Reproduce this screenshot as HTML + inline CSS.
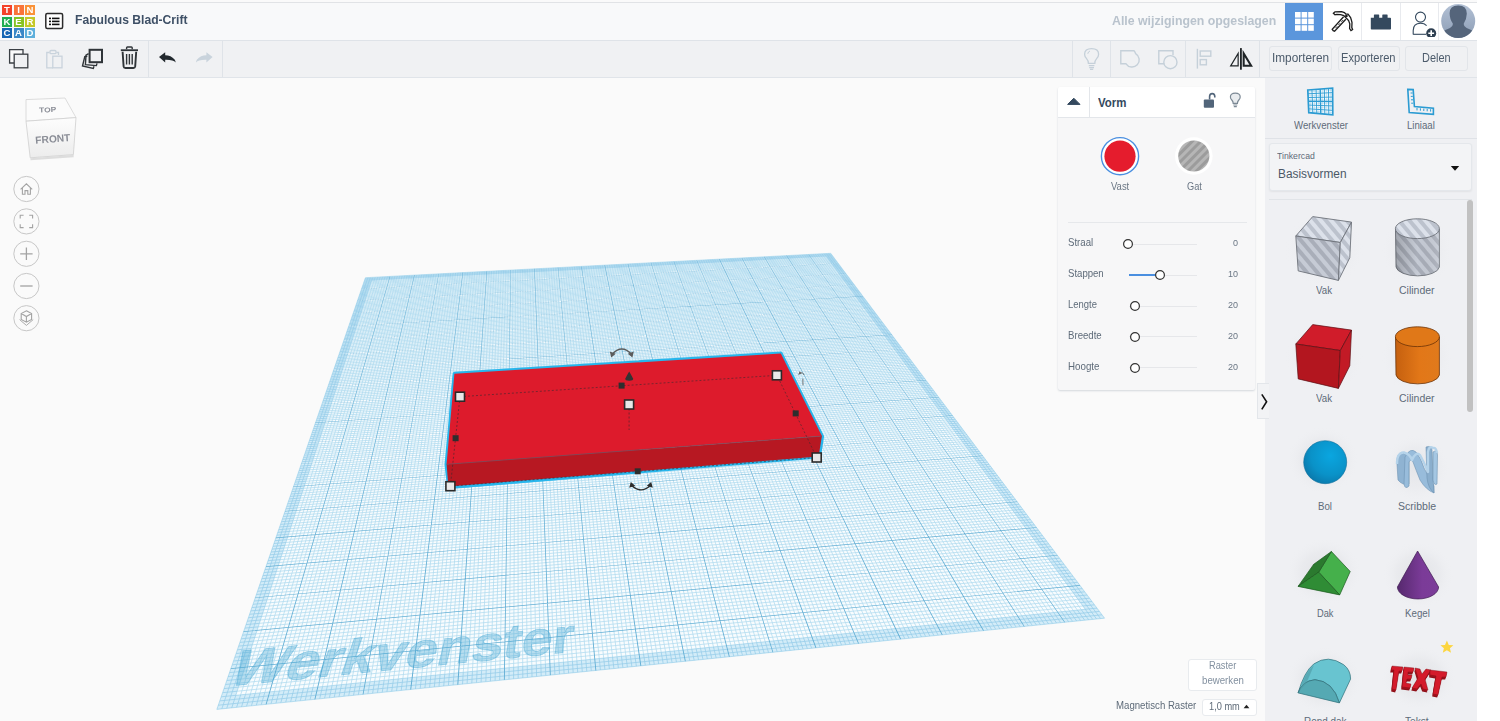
<!DOCTYPE html>
<html><head><meta charset="utf-8">
<style>
*{box-sizing:border-box;margin:0;padding:0}
html,body{width:1500px;height:721px;overflow:hidden;background:#fff;font-family:"Liberation Sans",sans-serif}
.abs{position:absolute}
#app{position:absolute;left:0;top:0;width:1477px;height:721px;background:#fafafa;overflow:hidden}
#hdr{position:absolute;left:0;top:3px;width:1477px;height:37px;background:#f8f9fa}
#tb{position:absolute;left:0;top:41px;width:1477px;height:37px;background:#f0f1f3;border-bottom:1px solid #e0e4e9}
.btn{position:absolute;height:25px;border:1px solid #e2e5e9;border-radius:3px;background:#f0f1f3}
#rp{position:absolute;left:1265px;top:78px;width:212px;height:643px;background:#eff0f3}
.grid{position:absolute;left:0;top:78px}
.sep{position:absolute;width:1px;background:#dfe3e8}
.t{position:absolute;white-space:nowrap;transform-origin:0 0}
.lg{position:absolute;width:10px;height:10px;color:#fff;font-weight:bold;font-size:9.6px;line-height:10.4px;text-align:center}
</style></head><body>
<div id="app">
<div id="view" class="abs" style="left:0;top:78px;width:1265px;height:643px;background:#fafafa">
</div>
<svg class="grid" width="1265" height="643" viewBox="0 78 1265 643">
<path d="M365.4 277.7L830.7 253.3L1104.6 618.2L216.8 709.4Z" fill="#f8fcfe"/>
<path d="M365.4 277.7L216.8 709.4M365.4 277.7L830.7 253.3M367.9 277.6L221.8 708.9M365.0 278.8L831.4 254.3M370.3 277.4L226.7 708.4M364.6 279.9L832.2 255.3M372.8 277.3L231.7 707.9M364.3 281.0L832.9 256.2M375.2 277.2L236.6 707.4M363.9 282.1L833.7 257.2M377.7 277.1L241.5 706.9M363.5 283.2L834.4 258.2M380.2 276.9L246.5 706.4M363.1 284.3L835.1 259.2M382.6 276.8L251.4 705.8M362.7 285.5L835.9 260.2M385.1 276.7L256.3 705.3M362.3 286.6L836.7 261.2M387.5 276.5L261.2 704.8M361.9 287.7L837.4 262.2M392.4 276.3L271.0 703.8M361.2 290.0L838.9 264.3M394.9 276.2L275.9 703.3M360.8 291.2L839.7 265.3M397.3 276.0L280.8 702.8M360.4 292.4L840.5 266.3M399.8 275.9L285.7 702.3M360.0 293.5L841.3 267.4M402.2 275.8L290.6 701.8M359.5 294.7L842.1 268.4M404.7 275.6L295.4 701.3M359.1 295.9L842.8 269.5M407.1 275.5L300.3 700.8M358.7 297.1L843.6 270.5M409.5 275.4L305.2 700.3M358.3 298.3L844.4 271.6M412.0 275.3L310.0 699.8M357.9 299.5L845.2 272.7M416.8 275.0L319.7 698.8M357.1 301.9L846.8 274.8M419.3 274.9L324.6 698.3M356.7 303.1L847.6 275.9M421.7 274.7L329.4 697.8M356.2 304.3L848.5 277.0M424.1 274.6L334.2 697.3M355.8 305.6L849.3 278.0M426.6 274.5L339.0 696.8M355.4 306.8L850.1 279.1M429.0 274.4L343.9 696.3M355.0 308.0L850.9 280.2M431.4 274.2L348.7 695.9M354.5 309.3L851.8 281.3M433.8 274.1L353.5 695.4M354.1 310.5L852.6 282.5M436.3 274.0L358.3 694.9M353.7 311.8L853.4 283.6M441.1 273.7L367.9 693.9M352.8 314.3L855.1 285.8M443.5 273.6L372.6 693.4M352.3 315.6L856.0 287.0M446.0 273.5L377.4 692.9M351.9 316.9L856.8 288.1M448.4 273.3L382.2 692.4M351.5 318.2L857.7 289.2M450.8 273.2L386.9 691.9M351.0 319.5L858.5 290.4M453.2 273.1L391.7 691.4M350.6 320.8L859.4 291.6M455.6 273.0L396.5 690.9M350.1 322.2L860.3 292.7M458.0 272.8L401.2 690.5M349.6 323.5L861.2 293.9M460.4 272.7L406.0 690.0M349.2 324.8L862.0 295.1M465.2 272.5L415.4 689.0M348.3 327.5L863.8 297.4M467.7 272.3L420.2 688.5M347.8 328.9L864.7 298.6M470.1 272.2L424.9 688.0M347.3 330.2L865.6 299.8M472.5 272.1L429.6 687.5M346.8 331.6L866.5 301.0M474.9 272.0L434.3 687.1M346.4 333.0L867.4 302.2M477.3 271.8L439.0 686.6M345.9 334.4L868.3 303.5M479.7 271.7L443.7 686.1M345.4 335.7L869.3 304.7M482.1 271.6L448.4 685.6M344.9 337.2L870.2 305.9M484.4 271.5L453.1 685.1M344.5 338.6L871.1 307.2M489.2 271.2L462.5 684.2M343.5 341.4L873.0 309.6M491.6 271.1L467.1 683.7M343.0 342.8L873.9 310.9M494.0 271.0L471.8 683.2M342.5 344.3L874.9 312.2M496.4 270.8L476.5 682.7M342.0 345.7L875.8 313.4M498.8 270.7L481.1 682.2M341.5 347.2L876.8 314.7M501.2 270.6L485.8 681.8M341.0 348.7L877.8 316.0M503.6 270.5L490.4 681.3M340.5 350.1L878.7 317.3M505.9 270.3L495.1 680.8M340.0 351.6L879.7 318.6M508.3 270.2L499.7 680.3M339.4 353.1L880.7 319.9M513.1 270.0L509.0 679.4M338.4 356.1L882.7 322.5M515.5 269.8L513.6 678.9M337.9 357.6L883.7 323.9M517.8 269.7L518.2 678.4M337.4 359.2L884.7 325.2M520.2 269.6L522.8 678.0M336.8 360.7L885.7 326.5M522.6 269.5L527.4 677.5M336.3 362.2L886.7 327.9M525.0 269.3L532.0 677.0M335.8 363.8L887.7 329.2M527.3 269.2L536.6 676.5M335.2 365.4L888.7 330.6M529.7 269.1L541.2 676.1M334.7 366.9L889.7 332.0M532.1 269.0L545.8 675.6M334.1 368.5L890.8 333.3M536.8 268.7L554.9 674.7M333.0 371.7L892.9 336.1M539.2 268.6L559.5 674.2M332.5 373.3L893.9 337.5M541.5 268.5L564.1 673.7M331.9 374.9L895.0 338.9M543.9 268.3L568.6 673.3M331.4 376.6L896.0 340.4M546.2 268.2L573.2 672.8M330.8 378.2L897.1 341.8M548.6 268.1L577.7 672.3M330.2 379.9L898.2 343.2M551.0 268.0L582.3 671.9M329.7 381.5L899.3 344.7M553.3 267.8L586.8 671.4M329.1 383.2L900.4 346.1M555.7 267.7L591.3 670.9M328.5 384.9L901.5 347.6M560.4 267.5L600.4 670.0M327.3 388.3L903.7 350.5M562.7 267.4L604.9 669.5M326.8 390.0L904.8 352.0M565.1 267.2L609.4 669.1M326.2 391.7L905.9 353.5M567.4 267.1L613.9 668.6M325.6 393.4L907.0 355.0M569.8 267.0L618.4 668.1M325.0 395.2L908.2 356.5M572.1 266.9L622.9 667.7M324.4 396.9L909.3 358.0M574.4 266.7L627.4 667.2M323.8 398.7L910.4 359.5M576.8 266.6L631.9 666.8M323.1 400.5L911.6 361.1M579.1 266.5L636.4 666.3M322.5 402.2L912.8 362.6M583.8 266.2L645.3 665.4M321.3 405.9L915.1 365.7M586.1 266.1L649.8 664.9M320.7 407.7L916.3 367.3M588.5 266.0L654.3 664.5M320.0 409.5L917.5 368.9M590.8 265.9L658.7 664.0M319.4 411.4L918.7 370.5M593.1 265.8L663.2 663.5M318.8 413.2L919.9 372.1M595.5 265.6L667.6 663.1M318.1 415.1L921.1 373.7M597.8 265.5L672.1 662.6M317.5 417.0L922.3 375.3M600.1 265.4L676.5 662.2M316.8 418.9L923.5 377.0M602.4 265.3L680.9 661.7M316.1 420.8L924.8 378.6M607.1 265.0L689.8 660.8M314.8 424.6L927.2 381.9M609.4 264.9L694.2 660.4M314.2 426.6L928.5 383.6M611.7 264.8L698.6 659.9M313.5 428.5L929.8 385.3M614.1 264.7L703.0 659.5M312.8 430.5L931.0 387.0M616.4 264.5L707.4 659.0M312.1 432.5L932.3 388.7M618.7 264.4L711.8 658.5M311.4 434.5L933.6 390.4M621.0 264.3L716.2 658.1M310.7 436.5L934.9 392.1M623.3 264.2L720.6 657.6M310.0 438.5L936.2 393.8M625.6 264.1L725.0 657.2M309.3 440.6L937.5 395.6M630.3 263.8L733.8 656.3M307.9 444.7L940.1 399.1M632.6 263.7L738.1 655.8M307.2 446.8L941.5 400.9M634.9 263.6L742.5 655.4M306.5 448.8L942.8 402.7M637.2 263.4L746.8 655.0M305.8 451.0L944.2 404.5M639.5 263.3L751.2 654.5M305.0 453.1L945.5 406.3M641.8 263.2L755.6 654.1M304.3 455.2L946.9 408.1M644.1 263.1L759.9 653.6M303.6 457.4L948.3 409.9M646.4 263.0L764.2 653.2M302.8 459.5L949.7 411.8M648.7 262.8L768.6 652.7M302.1 461.7L951.1 413.6M653.3 262.6L777.2 651.8M300.5 466.1L953.9 417.4M655.6 262.5L781.6 651.4M299.8 468.4L955.3 419.3M657.9 262.4L785.9 650.9M299.0 470.6L956.7 421.2M660.2 262.2L790.2 650.5M298.2 472.9L958.2 423.1M662.5 262.1L794.5 650.1M297.4 475.1L959.6 425.0M664.8 262.0L798.8 649.6M296.6 477.4L961.1 427.0M667.1 261.9L803.1 649.2M295.8 479.8L962.5 429.0M669.3 261.8L807.4 648.7M295.0 482.1L964.0 430.9M671.6 261.6L811.7 648.3M294.2 484.4L965.5 432.9M676.2 261.4L820.2 647.4M292.6 489.2L968.5 436.9M678.5 261.3L824.5 647.0M291.8 491.6L970.0 438.9M680.8 261.2L828.8 646.5M291.0 494.0L971.6 441.0M683.0 261.0L833.0 646.1M290.1 496.4L973.1 443.0M685.3 260.9L837.3 645.7M289.3 498.9L974.7 445.1M687.6 260.8L841.6 645.2M288.4 501.3L976.2 447.2M689.9 260.7L845.8 644.8M287.6 503.8L977.8 449.3M692.1 260.6L850.1 644.3M286.7 506.3L979.4 451.4M694.4 260.4L854.3 643.9M285.8 508.8L981.0 453.5M699.0 260.2L862.8 643.0M284.1 513.9L984.2 457.8M701.2 260.1L867.0 642.6M283.2 516.5L985.8 460.0M703.5 260.0L871.2 642.2M282.3 519.1L987.5 462.2M705.8 259.9L875.4 641.7M281.4 521.7L989.1 464.4M708.0 259.7L879.7 641.3M280.5 524.4L990.8 466.6M710.3 259.6L883.9 640.9M279.6 527.0L992.5 468.8M712.6 259.5L888.1 640.4M278.6 529.7L994.1 471.0M714.8 259.4L892.3 640.0M277.7 532.4L995.8 473.3M717.1 259.3L896.5 639.6M276.8 535.2L997.6 475.6M721.6 259.0L904.8 638.7M274.9 540.7L1001.0 480.2M723.9 258.9L909.0 638.3M273.9 543.5L1002.8 482.5M726.1 258.8L913.2 637.9M273.0 546.3L1004.5 484.9M728.4 258.7L917.4 637.4M272.0 549.1L1006.3 487.2M730.6 258.5L921.5 637.0M271.0 552.0L1008.1 489.6M732.9 258.4L925.7 636.6M270.0 554.8L1009.9 492.0M735.1 258.3L929.9 636.1M269.0 557.7L1011.7 494.4M737.4 258.2L934.0 635.7M268.0 560.7L1013.5 496.9M739.6 258.1L938.2 635.3M267.0 563.6L1015.4 499.3M744.1 257.8L946.5 634.4M264.9 569.6L1019.1 504.3M746.4 257.7L950.6 634.0M263.9 572.6L1021.0 506.8M748.6 257.6L954.7 633.6M262.8 575.7L1022.8 509.3M750.8 257.5L958.9 633.2M261.8 578.7L1024.8 511.8M753.1 257.4L963.0 632.7M260.7 581.8L1026.7 514.4M755.3 257.3L967.1 632.3M259.6 585.0L1028.6 517.0M757.6 257.1L971.2 631.9M258.5 588.1L1030.6 519.6M759.8 257.0L975.3 631.5M257.5 591.3L1032.5 522.2M762.0 256.9L979.4 631.1M256.4 594.5L1034.5 524.8M766.5 256.7L987.6 630.2M254.1 601.0L1038.5 530.2M768.7 256.5L991.7 629.8M253.0 604.3L1040.6 532.9M771.0 256.4L995.8 629.4M251.8 607.6L1042.6 535.6M773.2 256.3L999.9 629.0M250.7 610.9L1044.7 538.4M775.4 256.2L1004.0 628.5M249.5 614.3L1046.7 541.1M777.6 256.1L1008.1 628.1M248.4 617.7L1048.8 543.9M779.9 256.0L1012.1 627.7M247.2 621.2L1051.0 546.7M782.1 255.8L1016.2 627.3M246.0 624.6L1053.1 549.6M784.3 255.7L1020.3 626.9M244.8 628.1L1055.2 552.4M788.8 255.5L1028.4 626.0M242.3 635.2L1059.6 558.2M791.0 255.4L1032.4 625.6M241.1 638.8L1061.8 561.1M793.2 255.3L1036.5 625.2M239.9 642.4L1064.0 564.1M795.4 255.2L1040.5 624.8M238.6 646.1L1066.2 567.1M797.6 255.0L1044.6 624.4M237.3 649.8L1068.5 570.1M799.8 254.9L1048.6 624.0M236.1 653.5L1070.7 573.1M802.1 254.8L1052.6 623.5M234.8 657.2L1073.0 576.1M804.3 254.7L1056.6 623.1M233.5 661.0L1075.3 579.2M806.5 254.6L1060.7 622.7M232.1 664.8L1077.7 582.3M810.9 254.3L1068.7 621.9M229.5 672.6L1082.4 588.6M813.1 254.2L1072.7 621.5M228.1 676.5L1084.8 591.8M815.3 254.1L1076.7 621.1M226.7 680.5L1087.2 595.0M817.5 254.0L1080.7 620.7M225.4 684.5L1089.6 598.2M819.7 253.9L1084.7 620.2M224.0 688.6L1092.0 601.5M821.9 253.8L1088.7 619.8M222.6 692.7L1094.5 604.8M824.1 253.6L1092.7 619.4M221.1 696.8L1097.0 608.1M826.3 253.5L1096.6 619.0M219.7 700.9L1099.5 611.4M828.5 253.4L1100.6 618.6M218.3 705.2L1102.0 614.8M830.7 253.3L1104.6 618.2M216.8 709.4L1104.6 618.2" stroke="#b0dbef" stroke-width="0.75" fill="none"/>
<path d="M365.4 277.7L830.7 253.3L1104.6 618.2L216.8 709.4Z M371.7 280.6L235.8 695.3L1085.2 609.3L826.3 256.6Z" fill="#d9eff9" fill-rule="evenodd" style="mix-blend-mode:multiply"/>
<path d="M389.7 276.4L390.2 276.4L266.6 704.3L265.6 704.4ZM361.6 288.8L838.1 263.2L838.3 263.4L361.5 289.0ZM414.2 275.1L414.7 275.1L315.4 699.3L314.4 699.4ZM357.5 300.5L845.9 273.6L846.1 273.8L357.5 300.8ZM438.5 273.9L438.9 273.8L363.5 694.3L362.6 694.4ZM353.3 312.9L854.2 284.6L854.4 284.8L353.2 313.2ZM462.6 272.6L463.1 272.6L411.2 689.4L410.2 689.5ZM348.8 326.0L862.8 296.1L863.0 296.4L348.7 326.3ZM486.6 271.3L487.1 271.3L458.3 684.6L457.3 684.7ZM344.0 339.8L872.0 308.3L872.1 308.5L343.9 340.1ZM510.5 270.1L510.9 270.1L504.8 679.8L503.9 679.9ZM339.0 354.5L881.6 321.1L881.8 321.3L338.9 354.8ZM534.2 268.8L534.7 268.8L550.8 675.1L549.9 675.2ZM333.6 369.9L891.7 334.6L891.9 334.9L333.5 370.3ZM557.8 267.6L558.2 267.6L596.3 670.4L595.4 670.5ZM328.0 386.4L902.4 348.9L902.7 349.2L327.9 386.7ZM581.2 266.4L581.7 266.4L641.3 665.8L640.4 665.9ZM322.0 403.9L913.8 364.0L914.0 364.3L321.8 404.2ZM604.5 265.2L605.0 265.1L685.8 661.2L684.9 661.3ZM315.6 422.5L925.9 380.1L926.1 380.4L315.4 422.9ZM627.7 263.9L628.2 263.9L729.8 656.7L728.9 656.8ZM308.7 442.4L938.7 397.1L938.9 397.5L308.6 442.8ZM650.8 262.7L651.2 262.7L773.3 652.2L772.5 652.3ZM301.4 463.7L952.3 415.3L952.6 415.7L301.2 464.1ZM673.7 261.5L674.1 261.5L816.4 647.8L815.5 647.9ZM293.5 486.5L966.9 434.7L967.2 435.1L293.3 487.0ZM696.5 260.3L696.9 260.3L859.0 643.4L858.1 643.5ZM285.1 511.1L982.4 455.4L982.7 455.9L284.9 511.6ZM719.1 259.2L719.6 259.1L901.1 639.1L900.2 639.2ZM275.9 537.6L999.1 477.7L999.4 478.1L275.7 538.2ZM741.6 258.0L742.1 257.9L942.7 634.8L941.9 634.9ZM266.1 566.3L1017.0 501.5L1017.4 502.0L265.9 566.9ZM764.0 256.8L764.5 256.8L984.0 630.6L983.1 630.7ZM255.4 597.4L1036.3 527.2L1036.7 527.8L255.1 598.1ZM786.3 255.6L786.8 255.6L1024.7 626.4L1023.9 626.5ZM243.7 631.3L1057.2 555.0L1057.6 555.6L243.4 632.0ZM808.5 254.5L808.9 254.4L1065.1 622.3L1064.3 622.3ZM230.9 668.3L1079.8 585.1L1080.2 585.7L230.7 669.1Z" fill="#62aed4"/>
</svg>
<div class="abs" style="left:0;top:0;width:2000px;height:2000px;transform-origin:0 0;transform:matrix3d(0.2573767,-0.0046602472,0,2.9766099e-05,-0.12787801,0.040535243,0,-0.00024713104,0,0,1,0,365.4,277.7,0,1);pointer-events:none">
 <div class="t" style="left:2px;top:1834px;font-size:132px;line-height:132px;font-weight:bold;color:rgba(70,165,212,0.36);-webkit-text-stroke:3px rgba(70,165,212,0.36);transform-origin:0 112px;transform:skewX(-7deg) scaleX(0.95)">Werkvenster</div>
</div>

<svg class="abs" style="left:20px;top:92px" width="62" height="72" viewBox="20 92 62 72">
 <defs>
  <linearGradient id="cf" x1="0" y1="0" x2="0" y2="1"><stop offset="0" stop-color="#fdfdfd"/><stop offset="1" stop-color="#ececec"/></linearGradient>
  <linearGradient id="cr" x1="0" y1="0" x2="1" y2="0"><stop offset="0" stop-color="#e6e6e6"/><stop offset="1" stop-color="#f2f2f2"/></linearGradient>
 </defs>
 <path d="M30.5 158.2 L73.6 155 L73.6 157.2 L30.5 160.2 Z" fill="#d6d6d6" opacity="0.8"/>
 <path d="M26 99.6 L65 98 L76 117.6 L26 121.2 Z" fill="#fbfbfb" stroke="#d4d4d4" stroke-width="0.8" stroke-linejoin="round"/>
 <path d="M26 121.2 L76 117.6 L73.4 154.6 L30.2 157.8 Z" fill="url(#cf)" stroke="#cfcfcf" stroke-width="0.8" stroke-linejoin="round"/>
 <text x="0" y="0" transform="translate(39.2 112.6) rotate(-2.5) scale(1,0.85)" font-family="Liberation Sans" font-weight="bold" font-size="8.4" fill="#8a8d96">TOP</text>
 <text x="0" y="0" transform="translate(35.6 143.8) rotate(-4.5)" font-family="Liberation Sans" font-weight="bold" font-size="10.2" fill="#8a8d96">FRONT</text>
</svg>
<svg class="abs" style="left:10px;top:172px" width="34" height="164" viewBox="10 172 34 164" fill="none" stroke="#c7c7c7" stroke-width="1">
 <circle cx="26.4" cy="189" r="12.6" fill="#fafafa"/>
 <circle cx="26.4" cy="221.4" r="12.6" fill="#fafafa"/>
 <circle cx="26.4" cy="253.8" r="12.6" fill="#fafafa"/>
 <circle cx="26.4" cy="286" r="12.6" fill="#fafafa"/>
 <circle cx="26.4" cy="318.2" r="12.6" fill="#fafafa"/>
 <g stroke="#a3a3a3" stroke-width="1.1">
  <path d="M20.6 189.4 L26.4 183.8 L32.2 189.4 M22.4 187.8 V194.2 H25 V190.6 H27.8 V194.2 H30.4 V187.8"/>
  <path d="M20.2 218.6 V215.2 H23.6 M29.2 215.2 H32.6 V218.6 M32.6 224.2 V227.6 H29.2 M23.6 227.6 H20.2 V224.2"/>
  <path d="M26.4 247.6 V260 M20.2 253.8 H32.6" stroke-width="1.3"/>
  <path d="M20.2 286 H32.6" stroke-width="1.3"/>
  <path d="M26.4 310.8 L31.6 313.6 L31.6 319.4 L26.4 322.2 L21.2 319.4 L21.2 313.6 Z M21.2 313.6 L26.4 316.6 L31.6 313.6 M26.4 316.6 V322.2"/>
  <path d="M19.6 319.6 L26.4 325.4 L33.2 319.6" stroke-width="0.9"/>
 </g>
</svg>
<div class="abs" style="left:1188px;top:659px;width:69px;height:32px;background:#fff;border:1px solid #e8ebee;border-radius:3px"></div>
<div class="t" style="left:1208.80px;top:660.74px;font-size:10.0px;line-height:10.0px;font-weight:normal;color:#8391a0;transform:scaleX(0.9288)">Raster</div>
<div class="t" style="left:1201.60px;top:675.74px;font-size:10.0px;line-height:10.0px;font-weight:normal;color:#8391a0;transform:scaleX(0.9665)">bewerken</div>
<div class="t" style="left:1116.20px;top:700.93px;font-size:10.0px;line-height:10.0px;font-weight:normal;color:#5e6b79;transform:scaleX(0.9629)">Magnetisch Raster</div>
<div class="abs" style="left:1202px;top:699px;width:55px;height:17px;background:#fff;border:1px solid #e8ebee;border-radius:3px"></div>
<div class="t" style="left:1208.60px;top:702.13px;font-size:10.0px;line-height:10.0px;font-weight:normal;color:#5f6b78;transform:scaleX(0.9233)">1,0 mm</div>
<svg class="abs" style="left:1243px;top:704px" width="7" height="5" viewBox="0 0 7 5"><path d="M0.6 4.2 L3.5 0.8 L6.4 4.2 Z" fill="#222"/></svg>

<svg class="abs" style="left:0;top:78px" width="1265" height="643" viewBox="0 78 1265 643">
 <path d="M454.4 373.2 L781 353 L822.6 436.3 L819.4 457 L448.6 487.4 L446 464.6 Z" fill="none" stroke="#27b6ec" stroke-width="3" stroke-linejoin="round"/>
 <path d="M454.4 373.7 L780.8 353.6 L821.9 436.1 L446.6 464.3 Z" fill="#dd1b2c"/>
 <path d="M446.6 464.3 L821.9 436.1 L818.6 456.5 L448.4 486.6 Z" fill="#b71822"/>
 <path d="M446.6 464.3 L821.9 436.1" stroke="#7a4a5c" stroke-width="0.8" fill="none"/>
 <g stroke="#3a2a30" stroke-width="0.7" stroke-dasharray="2 2" fill="none" opacity="0.85">
  <path d="M460 396.7 L777 375.3 L816.7 457.5 L450.4 486.2 Z"/>
  <path d="M629.1 404.5 L629.1 430"/>
 </g>
 <path d="M611.8 354.4 Q621.8 343.6 631.8 354.4" fill="none" stroke="#5b5b5b" stroke-width="1.3"/>
 <path d="M609.8 351.6 L611.2 357.4 L615.8 353.8 Z M633.8 351.6 L632.4 357.4 L627.8 353.8 Z" fill="#5b5b5b"/>
 <path d="M631.2 485 Q641 494.8 650.8 485" fill="none" stroke="#2d2d2d" stroke-width="1.3"/>
 <path d="M629.2 487.8 L630.8 482 L635.2 485.8 Z M652.8 487.8 L651.2 482 L646.8 485.8 Z" fill="#2d2d2d"/>
 <path d="M799.8 372.8 Q803 371.8 804.2 375 M802.8 378.6 L803 385.4" fill="none" stroke="#666" stroke-width="0.9"/>
 <path d="M798.2 375 L801.6 373.6 L799.6 371.2 Z" fill="#666"/>
 <path d="M629.2 371.5 Q626 377 625.2 378.8 Q625 380.6 629.2 380.8 Q633.4 380.6 633.2 378.8 Q632.4 377 629.2 371.5 Z" fill="#333"/>
 <g fill="#2e2e2e">
  <rect x="618.6" y="382.6" width="6" height="6"/>
  <rect x="452.6" y="435.2" width="6" height="6"/>
  <rect x="792.7" y="410.4" width="6" height="6"/>
  <rect x="634.7" y="468.3" width="6" height="6"/>
 </g>
 <g fill="#e8e8e8" stroke="#2a2a2a" stroke-width="1.6">
  <rect x="624.6" y="400" width="9" height="9"/>
  <rect x="455.5" y="392.2" width="9" height="9"/>
  <rect x="772.4" y="370.8" width="9" height="9"/>
  <rect x="812.2" y="453" width="9" height="9"/>
  <rect x="445.9" y="481.7" width="9" height="9"/>
 </g>
</svg>

<div class="abs" style="left:1058px;top:87px;width:197px;height:303px;background:#f7f7f8;box-shadow:0 1px 2px rgba(40,60,90,0.18);border-radius:2px"></div>
<div class="abs" style="left:1058px;top:87px;width:197px;height:31px;background:#fff;border-bottom:1px solid #e3e6ea;border-radius:2px 2px 0 0"></div>
<div class="abs" style="left:1089px;top:87px;width:1px;height:31px;background:#e3e6ea"></div>
<svg class="abs" style="left:1066px;top:96px" width="16" height="10" viewBox="0 0 16 10"><path d="M1.6 8.4 L7.8 2.2 L14 8.4 Z" fill="#34495e" stroke="#34495e" stroke-width="1" stroke-linejoin="round"/></svg>
<div class="t" style="left:1097.80px;top:96.54px;font-size:12.0px;line-height:12.0px;font-weight:bold;color:#34495e;transform:scaleX(0.9546)">Vorm</div>
<svg class="abs" style="left:1203px;top:92px" width="13" height="17" viewBox="0 0 13 17">
 <path d="M6.6 7.4 V4.6 Q6.6 1.6 9.2 1.6 Q11.8 1.6 11.8 4.6 V5.6" fill="none" stroke="#52657a" stroke-width="1.6"/>
 <rect x="0.8" y="7.4" width="10.2" height="8.4" rx="1" fill="#52657a"/>
</svg>
<svg class="abs" style="left:1229px;top:92px" width="13" height="17" viewBox="0 0 13 17" fill="none" stroke="#7c8995" stroke-width="1.2">
 <path d="M4.2 11.4 Q4.2 9.6 2.8 8 Q1.4 6.6 1.4 4.9 Q1.4 1.2 6.3 1.2 Q11.2 1.2 11.2 4.9 Q11.2 6.6 9.8 8 Q8.4 9.6 8.4 11.4 Z" fill="#e9ecef"/>
 <path d="M4.3 13 H8.3 M4.8 14.6 H7.8"/>
</svg>
<svg class="abs" style="left:1098px;top:134px" width="44" height="44" viewBox="0 0 44 44">
 <circle cx="22" cy="22.2" r="18.6" fill="#fff" stroke="#4a8fe0" stroke-width="1.4"/>
 <circle cx="22" cy="22.2" r="15.6" fill="#e51c2d"/>
</svg>
<svg class="abs" style="left:1172px;top:134px" width="44" height="44" viewBox="0 0 44 44">
 <defs><pattern id="st" width="6" height="6" patternUnits="userSpaceOnUse" patternTransform="rotate(45)"><rect width="6" height="6" fill="#b6b6b6"/><rect width="3" height="6" fill="#9c9c9c"/></pattern></defs>
 <circle cx="21.8" cy="22" r="18.8" fill="#fff"/>
 <circle cx="21.8" cy="22" r="15.6" fill="url(#st)"/>
</svg>
<div class="t" style="left:1111.00px;top:180.69px;font-size:11.0px;line-height:11.0px;font-weight:normal;color:#6a7684;transform:scaleX(0.8612)">Vast</div>
<div class="t" style="left:1186.70px;top:180.69px;font-size:11.0px;line-height:11.0px;font-weight:normal;color:#6a7684;transform:scaleX(0.8394)">Gat</div>
<div class="abs" style="left:1068px;top:222px;width:179px;height:1px;background:#e6e8eb"></div>
<div class="t" style="left:1068.00px;top:237.39px;font-size:11.0px;line-height:11.0px;font-weight:normal;color:#5e6b79;transform:scaleX(0.8765)">Straal</div>
<div class="abs" style="left:1128.5px;top:243.7px;width:68px;height:1px;background:#e6e7ea"></div>
<svg class="abs" style="left:1122.0px;top:238.2px" width="12" height="12" viewBox="0 0 12 12"><circle cx="6" cy="6" r="4.4" fill="#fff" stroke="#333" stroke-width="1.2"/></svg>
<div class="t" style="left:1233.00px;top:239.08px;font-size:9.0px;line-height:9.0px;font-weight:normal;color:#6a7684;transform:scaleX(1.0000)">0</div>
<div class="t" style="left:1068.00px;top:268.19px;font-size:11.0px;line-height:11.0px;font-weight:normal;color:#5e6b79;transform:scaleX(0.8707)">Stappen</div>
<div class="abs" style="left:1128.5px;top:274.5px;width:68px;height:1px;background:#e6e7ea"></div>
<div class="abs" style="left:1128.5px;top:274.4px;width:31.5px;height:1.2px;background:#4a8fe0"></div>
<svg class="abs" style="left:1154.0px;top:269.0px" width="12" height="12" viewBox="0 0 12 12"><circle cx="6" cy="6" r="4.4" fill="#fff" stroke="#333" stroke-width="1.2"/></svg>
<div class="t" style="left:1228.00px;top:269.88px;font-size:9.0px;line-height:9.0px;font-weight:normal;color:#6a7684;transform:scaleX(1.0000)">10</div>
<div class="t" style="left:1068.00px;top:299.19px;font-size:11.0px;line-height:11.0px;font-weight:normal;color:#5e6b79;transform:scaleX(0.8593)">Lengte</div>
<div class="abs" style="left:1128.5px;top:305.5px;width:68px;height:1px;background:#e6e7ea"></div>
<svg class="abs" style="left:1128.5px;top:300.0px" width="12" height="12" viewBox="0 0 12 12"><circle cx="6" cy="6" r="4.4" fill="#fff" stroke="#333" stroke-width="1.2"/></svg>
<div class="t" style="left:1228.00px;top:300.88px;font-size:9.0px;line-height:9.0px;font-weight:normal;color:#6a7684;transform:scaleX(1.0000)">20</div>
<div class="t" style="left:1068.00px;top:329.99px;font-size:11.0px;line-height:11.0px;font-weight:normal;color:#5e6b79;transform:scaleX(0.8753)">Breedte</div>
<div class="abs" style="left:1128.5px;top:336.3px;width:68px;height:1px;background:#e6e7ea"></div>
<svg class="abs" style="left:1128.5px;top:330.8px" width="12" height="12" viewBox="0 0 12 12"><circle cx="6" cy="6" r="4.4" fill="#fff" stroke="#333" stroke-width="1.2"/></svg>
<div class="t" style="left:1228.00px;top:331.68px;font-size:9.0px;line-height:9.0px;font-weight:normal;color:#6a7684;transform:scaleX(1.0000)">20</div>
<div class="t" style="left:1068.00px;top:360.89px;font-size:11.0px;line-height:11.0px;font-weight:normal;color:#5e6b79;transform:scaleX(0.8873)">Hoogte</div>
<div class="abs" style="left:1128.5px;top:367.2px;width:68px;height:1px;background:#e6e7ea"></div>
<svg class="abs" style="left:1128.5px;top:361.7px" width="12" height="12" viewBox="0 0 12 12"><circle cx="6" cy="6" r="4.4" fill="#fff" stroke="#333" stroke-width="1.2"/></svg>
<div class="t" style="left:1228.00px;top:362.58px;font-size:9.0px;line-height:9.0px;font-weight:normal;color:#6a7684;transform:scaleX(1.0000)">20</div>

<div id="hdr"></div>
<div class="abs" style="left:0;top:2px;width:1477px;height:1px;background:#e1e3e6"></div>
<div class="abs" style="left:0;top:40px;width:1477px;height:1px;background:#dfe3e8"></div>
 <div class="abs" style="left:2px;top:5px;width:33px;height:33px">
  <div class="lg" style="left:0;top:0;background:#f4432a">T</div>
  <div class="lg" style="left:11.5px;top:0;background:#f9743a">I</div>
  <div class="lg" style="left:23px;top:0;background:#fa9238">N</div>
  <div class="lg" style="left:0;top:11.5px;background:#22ad52">K</div>
  <div class="lg" style="left:11.5px;top:11.5px;background:#87c323">E</div>
  <div class="lg" style="left:23px;top:11.5px;background:#c4c828">R</div>
  <div class="lg" style="left:0;top:23px;background:#1766b4">C</div>
  <div class="lg" style="left:11.5px;top:23px;background:#3a87c7">A</div>
  <div class="lg" style="left:23px;top:23px;background:#5fb0dc">D</div>
 </div>
 <svg class="abs" style="left:44px;top:12px" width="20" height="18" viewBox="0 0 20 18">
  <rect x="1.8" y="1.6" width="16.8" height="14.8" rx="1.5" fill="#fff" stroke="#2b2b2b" stroke-width="1.5"/>
  <rect x="5" y="5.6" width="2" height="1.6" fill="#111"/><rect x="8" y="5.6" width="7.5" height="1.6" fill="#111"/>
  <rect x="5" y="8.6" width="2" height="1.6" fill="#111"/><rect x="8" y="8.6" width="7.5" height="1.6" fill="#111"/>
  <rect x="5" y="11.6" width="2" height="1.6" fill="#111"/><rect x="8" y="11.6" width="7.5" height="1.6" fill="#111"/>
 </svg>
 <div class="t" style="left:74.50px;top:13.17px;font-size:13.5px;line-height:13.5px;font-weight:bold;color:#3e5066;transform:scaleX(0.8982)">Fabulous Blad-Crift</div>
 <div class="t" style="left:1112.40px;top:13.60px;font-size:13.0px;line-height:13.0px;font-weight:bold;color:#b9c3cd;transform:scaleX(0.9470)">Alle wijzigingen opgeslagen</div>
 <div class="abs" style="left:1285px;top:3px;width:38px;height:37px;background:#5b96dc">
  <svg class="abs" style="left:10px;top:9px" width="19" height="19" viewBox="0 0 19 19">
   <g fill="#fff"><rect x="0" y="0" width="5.6" height="5.6"/><rect x="6.6" y="0" width="5.6" height="5.6"/><rect x="13.2" y="0" width="5.6" height="5.6"/>
   <rect x="0" y="6.6" width="5.6" height="5.6"/><rect x="6.6" y="6.6" width="5.6" height="5.6"/><rect x="13.2" y="6.6" width="5.6" height="5.6"/>
   <rect x="0" y="13.2" width="5.6" height="5.6"/><rect x="6.6" y="13.2" width="5.6" height="5.6"/><rect x="13.2" y="13.2" width="5.6" height="5.6"/></g>
  </svg>
 </div>
 <div class="abs" style="left:1323px;top:3px;width:38px;height:37px;background:#fff">
  <svg class="abs" style="left:8px;top:7px" width="24" height="24" viewBox="0 0 24 24" fill="none" stroke="#1c1c1c" stroke-width="1.3" stroke-linejoin="miter">
   <path d="M2.4 3.2 L4 1.8 L10.6 1.6 L13.4 2.6 L14.6 3.8 L17 4.2 L19.6 7.6 L20.4 10.2 L21 12.6 L20.8 17.6 L21.6 19.6 L20 20.6 L18.6 18.6 L18.8 13.8 L17.6 10.6 L15.4 8.2 L12.8 5.6 L9.6 4.6 L5.8 4.4 L4 4.8 Z"/>
   <path d="M12.6 6.8 L1.2 19.2 L2.2 20.6 L3.6 21.2 L14.8 9.2"/>
   <rect x="14.2" y="4.6" width="2.4" height="2.4" fill="#1c1c1c" stroke="none"/>
   <path d="M4.4 18.2 L6.2 16.4 M7.4 15 L9.2 13.2 M10.4 11.8 L12.2 10" stroke-width="0.9"/>
  </svg>
 </div>
 <div class="sep" style="left:1361px;top:3px;height:37px;background:#e8eaee"></div>
 <div class="abs" style="left:1362px;top:3px;width:38px;height:37px;background:#fff">
  <svg class="abs" style="left:8px;top:11px" width="22" height="16" viewBox="0 0 22 16">
   <path d="M0.8 3.8 L3.9 3.8 L3.9 1.1 Q3.9 0.5 4.5 0.5 L8.6 0.5 Q9.2 0.5 9.2 1.1 L9.2 3.8 L12.3 3.8 L12.3 1.1 Q12.3 0.5 12.9 0.5 L17 0.5 Q17.6 0.5 17.6 1.1 L17.6 3.8 L20.2 3.8 Q21 3.8 21 4.6 L21 14.8 Q21 15.6 20.2 15.6 L1.6 15.6 Q0.8 15.6 0.8 14.8 Z" fill="#34495e"/>
  </svg>
 </div>
 <div class="sep" style="left:1400px;top:3px;height:37px;background:#e8eaee"></div>
 <div class="abs" style="left:1401px;top:3px;width:38px;height:37px;background:#fff">
  <svg class="abs" style="left:8.5px;top:5.5px" width="28" height="28" viewBox="0 0 28 28">
   <circle cx="10.5" cy="8.1" r="5" fill="none" stroke="#34495e" stroke-width="1.1"/>
   <path d="M3.2 25.4 L3.2 21.5 Q3.2 14.3 10.5 14.3 Q14.5 14.3 16.6 16.6" fill="none" stroke="#34495e" stroke-width="1.1"/>
   <path d="M3.2 25.3 L16 25.3" stroke="#34495e" stroke-width="1.1"/>
   <circle cx="21.2" cy="24.2" r="5" fill="#2d3e50"/>
   <path d="M21.2 21.3 V27.1 M18.3 24.2 H24.1" stroke="#fff" stroke-width="1.6"/>
  </svg>
 </div>
 <div class="sep" style="left:1438px;top:3px;height:37px;background:#e8eaee"></div>
 <div class="abs" style="left:1439px;top:3px;width:38px;height:37px;background:#fff">
  <svg class="abs" style="left:2px;top:0px" width="36" height="37" viewBox="0 2 36 37">
   <defs><linearGradient id="av" x1="0" y1="0" x2="0" y2="1"><stop offset="0" stop-color="#b3c1d5"/><stop offset="1" stop-color="#8c9db5"/></linearGradient>
   <clipPath id="avc"><circle cx="17.2" cy="20" r="17"/></clipPath></defs>
   <circle cx="17.2" cy="20" r="17" fill="url(#av)"/>
   <g clip-path="url(#avc)" fill="#55657b">
    <path d="M8.6 12.6 Q8.4 4.2 17.4 4.4 Q26 4.6 25.8 12.8 Q25.6 18.6 22.8 22.6 Q22.4 25.6 25.6 27 Q33 29.6 36 34 L36 40 L-2 40 L-2 34 Q1.6 29.6 9 27 Q12.2 25.6 11.8 22.6 Q8.8 18.6 8.6 12.6 Z"/>
   </g>
  </svg>
 </div>
<div id="tb"></div>
<div class="sep" style="left:148px;top:41px;height:36px"></div>
<div class="sep" style="left:222px;top:41px;height:36px"></div>
<div class="sep" style="left:1072px;top:41px;height:36px"></div>
<div class="sep" style="left:1110px;top:41px;height:36px"></div>
<div class="sep" style="left:1185px;top:41px;height:36px"></div>
<div class="sep" style="left:1259px;top:41px;height:36px"></div>
<svg class="abs" style="left:8px;top:48px" width="22" height="22" viewBox="0 0 22 22" fill="none" stroke="#3a3f44" stroke-width="1.3">
 <path d="M15 6 V1.6 H1.6 V15 H6" fill="#fafafa"/>
 <rect x="6.2" y="6.2" width="13.6" height="13.6" fill="#eff0f2"/>
</svg>
<svg class="abs" style="left:45px;top:48px" width="20" height="22" viewBox="0 0 20 22" fill="none" stroke="#c9d3dc" stroke-width="1.3">
 <path d="M4.5 4.5 H1.8 V19.8 H8"/><path d="M11.5 4.5 H13.5 V7"/>
 <rect x="5" y="2.5" width="6" height="3.2" rx="1"/>
 <rect x="7.8" y="8.2" width="9.2" height="11.6"/>
</svg>
<svg class="abs" style="left:81px;top:48px" width="23" height="23" viewBox="0 0 23 23" fill="none" stroke="#2f3438" stroke-width="1.4">
 <path d="M6.3 8.2 L3.8 8.6 L1.5 18 L12.3 20.5 L13 18.3"/>
 <path d="M7.6 5.6 L5 7.2 L4.4 16.6 L15.4 17.6 L16 15.4"/>
 <rect x="8.6" y="1.8" width="12.4" height="12.4" stroke-width="2" fill="#f0f1f3"/>
</svg>
<svg class="abs" style="left:119px;top:46px" width="21" height="24" viewBox="0 0 21 24" fill="none" stroke="#2f3438">
 <path d="M7.6 3.2 V1.8 Q7.6 1 8.4 1 H12.4 Q13.2 1 13.2 1.8 V3.2" stroke-width="1.4"/>
 <path d="M1.8 4.2 H19" stroke-width="1.8"/>
 <path d="M3.6 5.8 L4.6 20.4 Q4.8 22 6.4 22 H14.4 Q16 22 16.2 20.4 L17.2 5.8" stroke-width="1.9"/>
 <path d="M7.6 8 V18.4 M10.4 8 V18.4 M13.2 8 V18.4" stroke-width="1.4"/>
</svg>
<svg class="abs" style="left:158px;top:51px" width="20" height="14" viewBox="0 0 20 14">
 <path d="M1 6 L7.2 1.3 L7.2 4.3 Q13 4.3 16.6 8.6 Q17.6 10 17.6 11.6 Q15.4 8.6 7.2 8.8 L7.2 11.4 Z" fill="#22292e"/>
</svg>
<svg class="abs" style="left:194px;top:51px" width="20" height="14" viewBox="0 0 20 14">
 <path d="M18.6 6 L12.4 1.3 L12.4 4.3 Q6.6 4.3 3 8.6 Q2 10 2 11.6 Q4.2 8.6 12.4 8.8 L12.4 11.4 Z" fill="#c9d3dc"/>
</svg>
<svg class="abs" style="left:1083px;top:47px" width="18" height="24" viewBox="0 0 18 24" fill="none" stroke="#c5d0d9" stroke-width="1.3">
 <path d="M5.4 16.4 Q5.4 13.6 3.4 11.4 Q1.6 9.4 1.6 7.2 Q1.6 1.6 8.6 1.6 Q15.6 1.6 15.6 7.2 Q15.6 9.4 13.8 11.4 Q11.8 13.6 11.8 16.4 Z"/>
 <path d="M5.8 18.6 H11.4 M6.2 20.6 H11 M7 22.4 H10.2"/>
 <path d="M4.8 6.8 Q5 4.6 7 4" stroke-width="1"/>
</svg>
<svg class="abs" style="left:1119px;top:49px" width="22" height="22" viewBox="0 0 22 22" fill="none" stroke="#c5d0d9" stroke-width="1.4">
 <path d="M1.8 1.8 H15 Q16.2 3 16.6 4.6 A7.2 7.2 0 1 1 7 14.8 H1.8 Z"/>
</svg>
<svg class="abs" style="left:1157px;top:49px" width="22" height="22" viewBox="0 0 22 22" fill="none" stroke="#c5d0d9" stroke-width="1.4">
 <path d="M7.2 14.8 H1.8 V1.8 H16 V6"/>
 <circle cx="13.4" cy="13.2" r="6.6"/>
</svg>
<svg class="abs" style="left:1195px;top:48px" width="18" height="22" viewBox="0 0 18 22" fill="none" stroke="#c5d0d9" stroke-width="1.4">
 <path d="M2.4 0.8 V20.6"/>
 <rect x="5.2" y="3" width="10.6" height="5.2"/>
 <rect x="5.2" y="11.6" width="6.2" height="5.2"/>
</svg>
<svg class="abs" style="left:1228.5px;top:46.5px" width="24" height="24" viewBox="0 0 26 26" fill="none" stroke="#1f2427">
 <path d="M12.9 1.2 V24.6" stroke-width="2"/>
 <path d="M9.9 7 V20.4 H1.8 Z" stroke-width="1.3"/>
 <path d="M15.9 7 V20.4 H24 Z" stroke-width="2.2"/>
</svg>
<div class="btn" style="left:1269px;top:46px;width:62.5px">&nbsp;</div>
<div class="btn" style="left:1337.5px;top:46px;width:62px">&nbsp;</div>
<div class="btn" style="left:1404.5px;top:46px;width:63px">&nbsp;</div>
<div class="t" style="left:1272.30px;top:51.64px;font-size:12.0px;line-height:12.0px;font-weight:normal;color:#4c5b6b;transform:scaleX(0.9845)">Importeren</div>
<div class="t" style="left:1341.20px;top:51.64px;font-size:12.0px;line-height:12.0px;font-weight:normal;color:#4c5b6b;transform:scaleX(0.9294)">Exporteren</div>
<div class="t" style="left:1422.00px;top:51.64px;font-size:12.0px;line-height:12.0px;font-weight:normal;color:#4c5b6b;transform:scaleX(0.9120)">Delen</div>
<div id="rp"></div>
<div class="abs" style="left:1265px;top:138px;width:212px;height:1px;background:#dfe2e7"></div>
<svg class="abs" style="left:1306px;top:87px" width="29" height="30" viewBox="0 0 29 30" fill="none" stroke="#2b9bd2">
 <path d="M1.80 3.00L26.60 1.20L26.80 27.80L2.80 25.60Z" stroke-width="1.7" fill="#fff"/>
 <path d="M3.87 2.85L4.80 25.78M1.88 4.88L26.62 3.42M8.00 2.55L8.80 26.15M2.05 8.65L26.65 7.85M12.13 2.25L12.80 26.52M2.22 12.42L26.68 12.28M16.27 1.95L16.80 26.88M2.38 16.18L26.72 16.72M20.40 1.65L20.80 27.25M2.55 19.95L26.75 21.15M24.53 1.35L24.80 27.62M2.72 23.72L26.78 25.58" stroke-width="0.4" stroke-opacity="0.5"/>
 <path d="M5.93 2.70L6.80 25.97M1.97 6.77L26.63 5.63M10.07 2.40L10.80 26.33M2.13 10.53L26.67 10.07M18.33 1.80L18.80 27.07M2.47 18.07L26.73 18.93M22.47 1.50L22.80 27.43M2.63 21.83L26.77 23.37" stroke-width="0.9"/>
 <path d="M14.20 2.10L14.80 26.70M2.30 14.30L26.70 14.50" stroke-width="1.4"/>
</svg>
<svg class="abs" style="left:1406px;top:88px" width="30" height="30" viewBox="0 0 30 30" fill="none" stroke="#2b9bd2">
 <path d="M1.8 1.4 L7.2 1.6 L8.4 18.6 L27.4 20.2 L27.4 26.4 L3.2 24.6 Z" stroke-width="1.6"/>
 <path d="M4.6 5 H6.6 M4.8 8.4 H6.8 M5 11.8 H7 M5.2 15.2 H7.2 M11 20 V22.4 M14.4 20.3 V22.7 M17.8 20.6 V23 M21.2 20.9 V23.3 M24.6 21.2 V23.6" stroke-width="1"/>
</svg>
<div class="t" style="left:1294.00px;top:120.29px;font-size:11.0px;line-height:11.0px;font-weight:normal;color:#5e6b79;transform:scaleX(0.8780)">Werkvenster</div>
<div class="t" style="left:1406.60px;top:120.29px;font-size:11.0px;line-height:11.0px;font-weight:normal;color:#5e6b79;transform:scaleX(0.8756)">Liniaal</div>
<div class="abs" style="left:1269px;top:143px;width:203px;height:48px;background:#f3f4f6;border:1px solid #e4e7eb;border-radius:3px;box-shadow:0 1px 2px rgba(0,0,0,0.06)"></div>
<div class="t" style="left:1277.20px;top:152.38px;font-size:9.0px;line-height:9.0px;font-weight:normal;color:#5e6b79;transform:scaleX(0.9656)">Tinkercad</div>
<div class="t" style="left:1277.50px;top:168.42px;font-size:12.5px;line-height:12.5px;font-weight:normal;color:#4b5867;transform:scaleX(0.9481)">Basisvormen</div>
<svg class="abs" style="left:1450px;top:165px" width="10" height="7" viewBox="0 0 10 7"><path d="M0.8 1 H9.2 L5 5.8 Z" fill="#111"/></svg>
<div class="abs" style="left:1269px;top:199px;width:203px;height:1px;background:#e1e4e8"></div>
<svg class="abs" style="left:1265px;top:200px" width="200" height="521" viewBox="1265 200 200 521">
 <defs>
  <radialGradient id="sh"><stop offset="0" stop-color="#d4d5d9" stop-opacity="0.9"/><stop offset="0.6" stop-color="#dddee2" stop-opacity="0.5"/><stop offset="1" stop-color="#eff0f3" stop-opacity="0"/></radialGradient>
  <pattern id="gs" width="8" height="8" patternUnits="userSpaceOnUse" patternTransform="rotate(-40)"><rect width="8" height="8" fill="#c6cbd5"/><rect width="4" height="8" fill="#a9aeb9"/></pattern>
  <pattern id="gs2" width="8" height="8" patternUnits="userSpaceOnUse" patternTransform="rotate(-40)"><rect width="8" height="8" fill="#dce1ea"/><rect width="4" height="8" fill="#bcc2cd"/></pattern>
  <linearGradient id="cyl" x1="0" x2="1"><stop offset="0" stop-color="#000" stop-opacity="0.18"/><stop offset="0.5" stop-color="#000" stop-opacity="0"/><stop offset="1" stop-color="#fff" stop-opacity="0.1"/></linearGradient>
  <linearGradient id="org" x1="0" x2="1"><stop offset="0" stop-color="#c5600f"/><stop offset="0.55" stop-color="#e27718"/><stop offset="1" stop-color="#e07a1c"/></linearGradient>
  <radialGradient id="bol" cx="0.62" cy="0.35" r="0.75"><stop offset="0" stop-color="#0aa6e0"/><stop offset="0.6" stop-color="#0a92c8"/><stop offset="1" stop-color="#0a74a6"/></radialGradient>
  <linearGradient id="kg" x1="0" x2="1"><stop offset="0" stop-color="#56296e"/><stop offset="0.6" stop-color="#7b3b98"/><stop offset="1" stop-color="#7c3d99"/></linearGradient>
 </defs>
 <ellipse cx="1324" cy="250" rx="40" ry="38" fill="url(#sh)" opacity="0.35"/>
 <ellipse cx="1417" cy="250" rx="36" ry="38" fill="url(#sh)" opacity="0.35"/>
 <ellipse cx="1324" cy="357" rx="40" ry="38" fill="url(#sh)" opacity="0.4"/>
 <ellipse cx="1417" cy="357" rx="36" ry="38" fill="url(#sh)" opacity="0.4"/>
 <ellipse cx="1323" cy="460" rx="36" ry="34" fill="url(#sh)" opacity="0.6"/>
 <ellipse cx="1416" cy="468" rx="34" ry="34" fill="url(#sh)" opacity="0.45"/>
 <ellipse cx="1324" cy="572" rx="38" ry="34" fill="url(#sh)" opacity="0.6"/>
 <ellipse cx="1418" cy="575" rx="36" ry="34" fill="url(#sh)" opacity="0.6"/>
 <ellipse cx="1324" cy="680" rx="38" ry="34" fill="url(#sh)" opacity="0.6"/>
 <ellipse cx="1419" cy="678" rx="38" ry="32" fill="url(#sh)" opacity="0.6"/>
 <!-- gray cube -->
 <g stroke="#6e737b" stroke-width="0.9" stroke-linejoin="round">
  <path d="M1312.7 216.6 L1351.5 222.1 L1340.3 242.5 L1295.8 236 Z" fill="url(#gs2)"/>
  <path d="M1295.8 236 L1340.3 242.5 L1338.4 280.4 L1298.2 270.9 Z" fill="url(#gs)"/>
  <path d="M1340.3 242.5 L1351.5 222.1 L1349.8 257.7 L1338.4 280.4 Z" fill="url(#gs2)"/>
 </g>
 <!-- gray cylinder -->
 <path d="M1395.5 229 L1396 267 A21.8 9.8 0 0 0 1439.4 267 L1439.4 229 Z" fill="url(#gs)" stroke="#6e737b" stroke-width="0.9"/>
 <path d="M1395.5 229 L1396 267 A21.8 9.8 0 0 0 1439.4 267 L1439.4 229 Z" fill="url(#cyl)"/>
 <ellipse cx="1417.4" cy="228.7" rx="22" ry="9.9" fill="url(#gs2)" stroke="#6e737b" stroke-width="0.9"/>
 <!-- red cube -->
 <g stroke="#5a1014" stroke-width="0.7" stroke-linejoin="round">
  <path d="M1312.7 324.6 L1351.5 330.1 L1340.3 350.5 L1295.8 344 Z" fill="#d01c2a"/>
  <path d="M1295.8 344 L1340.3 350.5 L1338.4 388.4 L1298.2 378.9 Z" fill="#b3161f"/>
  <path d="M1340.3 350.5 L1351.5 330.1 L1349.8 365.7 L1338.4 388.4 Z" fill="#c21a26"/>
 </g>
 <!-- orange cylinder -->
 <path d="M1395.5 337 L1396 375 A21.8 9.8 0 0 0 1439.4 375 L1439.4 337 Z" fill="url(#org)" stroke="#6b3208" stroke-width="0.8"/>
 <ellipse cx="1417.4" cy="336.7" rx="22" ry="9.9" fill="#e07818" stroke="#6b3208" stroke-width="0.8"/>
 <!-- bol -->
 <circle cx="1325.2" cy="462.2" r="21.5" fill="url(#bol)" stroke="#0b6d9b" stroke-width="0.6"/>
 <!-- scribble -->
 <g stroke="#6f94b3" stroke-width="0.6" stroke-linejoin="round">
  <path d="M1397 464 Q1396 452 1403 453 Q1409 455 1409 462 L1409 484 Q1403 486 1398 480 Z" fill="#8fb3d2"/>
  <path d="M1405 457 Q1410 447 1416 452 Q1421 458 1424 468 Q1428 476 1434 486 L1434 493 Q1426 490 1420 480 Q1416 470 1413 462 Q1411 458 1409 462 L1409 486 Q1405 490 1404 484 Z" fill="#98bcdb"/>
  <path d="M1426 447 Q1431 445 1432 450 L1433 478 L1434 493 Q1428 488 1427 478 Z" fill="#8aaecd"/>
  <path d="M1433 452 Q1437 449 1437.5 455 L1437 484 Q1434 486 1433 480 Z" fill="#a4c6e2"/>
  <path d="M1397 464 Q1397 452 1404 452.5 Q1410 454 1412 460 Q1416 451 1420 455 Q1424 462 1428 472 L1428 452 Q1429 445 1433 448 Q1436 447 1437 453" fill="none" stroke="#b5d3ea" stroke-width="2.4"/>
 </g>
 <!-- dak -->
 <g stroke="#1d5a20" stroke-width="0.7" stroke-linejoin="round">
  <path d="M1331.4 551.5 L1350.2 571.5 L1339.7 594.9 L1318.7 572.2 Z" fill="#45b04b"/>
  <path d="M1313.7 564.3 L1331.4 551.5 L1318.7 572.2 L1298.1 586.4 Z" fill="#2b7a2f"/>
  <path d="M1298.1 586.4 L1318.7 572.2 L1339.7 594.9 Z" fill="#2f8c35"/>
 </g>
 <!-- kegel -->
 <path d="M1417.6 551 L1438.6 587 A20.6 12 0 0 1 1397.4 587 Z" fill="url(#kg)" stroke="#3f1b52" stroke-width="0.7" stroke-linejoin="round"/>
 <!-- rond dak -->
 <g stroke="#2f6f79" stroke-width="0.7" stroke-linejoin="round">
  <path d="M1298.1 692.9 Q1304 672 1313.7 664 Q1328 654 1343.7 664.7 Q1350.6 670 1350.6 679 L1339.4 702.9 Q1333 681 1315 679.7 Q1302 681 1298.1 692.9 Z" fill="#68c4d0"/>
  <path d="M1298.1 692.9 Q1302 681 1315 679.7 Q1333 681 1339.4 702.9 Z" fill="#55a9b3"/>
 </g>
 <path d="M1300 690 Q1305 672 1314 665 Q1310 675 1306 684 Z" fill="#4f9aa4" opacity="0.6"/>
 <!-- tekst -->
 <g fill="#8e0f18" transform="translate(-0.8 2.6)">
  <path d="M1392 666 L1403 667 L1402 671 L1399 671 L1396 690 L1392 689 L1394 670 L1391 670 Z"/>
  <path d="M1404 667 L1414 668 L1413 672 L1408 672 L1408 675 L1412 675 L1411 679 L1407 679 L1406 683 L1411 684 L1410 688 L1402 687 Z"/>
  <path d="M1415 668 L1420 669 L1422 674 L1426 669 L1431 670 L1425 679 L1428 690 L1423 689 L1421 684 L1417 689 L1412 688 L1418 678 Z"/>
  <path d="M1430 670 L1447 672 L1446 677 L1442 677 L1438 695 L1433 694 L1436 676 L1430 675 Z"/>
 </g>
 <g fill="#a3121d" transform="translate(-0.4 1.3)">
  <path d="M1392 666 L1403 667 L1402 671 L1399 671 L1396 690 L1392 689 L1394 670 L1391 670 Z"/>
  <path d="M1404 667 L1414 668 L1413 672 L1408 672 L1408 675 L1412 675 L1411 679 L1407 679 L1406 683 L1411 684 L1410 688 L1402 687 Z"/>
  <path d="M1415 668 L1420 669 L1422 674 L1426 669 L1431 670 L1425 679 L1428 690 L1423 689 L1421 684 L1417 689 L1412 688 L1418 678 Z"/>
  <path d="M1430 670 L1447 672 L1446 677 L1442 677 L1438 695 L1433 694 L1436 676 L1430 675 Z"/>
 </g>
 <g fill="#d41b2b" stroke="#7a0d14" stroke-width="0.4" stroke-linejoin="round">
  <path d="M1392 666 L1403 667 L1402 671 L1399 671 L1396 690 L1392 689 L1394 670 L1391 670 Z"/>
  <path d="M1404 667 L1414 668 L1413 672 L1408 672 L1408 675 L1412 675 L1411 679 L1407 679 L1406 683 L1411 684 L1410 688 L1402 687 Z"/>
  <path d="M1415 668 L1420 669 L1422 674 L1426 669 L1431 670 L1425 679 L1428 690 L1423 689 L1421 684 L1417 689 L1412 688 L1418 678 Z"/>
  <path d="M1430 670 L1447 672 L1446 677 L1442 677 L1438 695 L1433 694 L1436 676 L1430 675 Z"/>
 </g>
 <path d="M1446.9 640.5 L1448.8 644.9 L1453.4 645.2 L1449.9 648.2 L1451 652.8 L1446.9 650.3 L1442.8 652.8 L1443.9 648.2 L1440.4 645.2 L1445 644.9 Z" fill="#fcd53f"/>
</svg>
<div class="t" style="left:1316.40px;top:285.29px;font-size:11.0px;line-height:11.0px;font-weight:normal;color:#5e6b79;transform:scaleX(0.8811)">Vak</div>
<div class="t" style="left:1399.00px;top:285.29px;font-size:11.0px;line-height:11.0px;font-weight:normal;color:#5e6b79;transform:scaleX(0.9530)">Cilinder</div>
<div class="t" style="left:1316.40px;top:393.19px;font-size:11.0px;line-height:11.0px;font-weight:normal;color:#5e6b79;transform:scaleX(0.8811)">Vak</div>
<div class="t" style="left:1399.00px;top:393.19px;font-size:11.0px;line-height:11.0px;font-weight:normal;color:#5e6b79;transform:scaleX(0.9530)">Cilinder</div>
<div class="t" style="left:1317.70px;top:500.59px;font-size:11.0px;line-height:11.0px;font-weight:normal;color:#5e6b79;transform:scaleX(0.8812)">Bol</div>
<div class="t" style="left:1398.00px;top:500.59px;font-size:11.0px;line-height:11.0px;font-weight:normal;color:#5e6b79;transform:scaleX(0.9585)">Scribble</div>
<div class="t" style="left:1316.50px;top:608.39px;font-size:11.0px;line-height:11.0px;font-weight:normal;color:#5e6b79;transform:scaleX(0.8405)">Dak</div>
<div class="t" style="left:1404.70px;top:608.39px;font-size:11.0px;line-height:11.0px;font-weight:normal;color:#5e6b79;transform:scaleX(0.8850)">Kegel</div>
<div class="t" style="left:1303.50px;top:716.19px;font-size:11.0px;line-height:11.0px;font-weight:normal;color:#5e6b79;transform:scaleX(0.9037)">Rond dak</div>
<div class="t" style="left:1405.00px;top:716.19px;font-size:11.0px;line-height:11.0px;font-weight:normal;color:#5e6b79;transform:scaleX(0.9204)">Tekst</div>
<div class="abs" style="left:1467px;top:200px;width:6px;height:212px;background:#c1c1c1;border-radius:3px"></div>

<div class="abs" style="left:1257px;top:383px;width:12px;height:36px;background:#f2f3f5;border:1px solid #e3e6ea;border-right:none"></div>
<svg class="abs" style="left:1260px;top:393px" width="9" height="18" viewBox="0 0 9 18"><path d="M1.8 1.4 L6.6 8.8 L1.8 16.4" fill="none" stroke="#111" stroke-width="1.6"/></svg>
</div>
</body></html>
